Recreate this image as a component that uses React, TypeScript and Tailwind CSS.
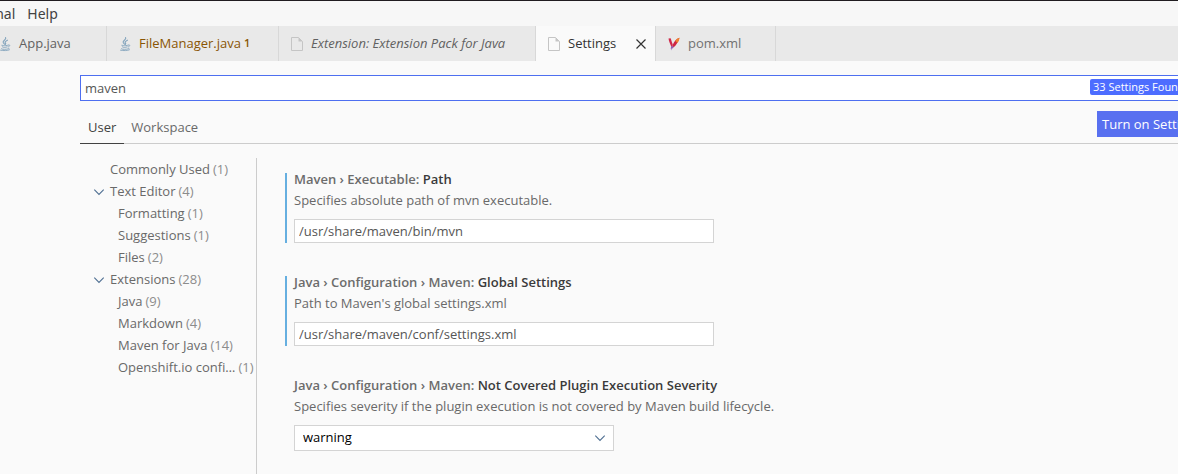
import { ReactNode, useState } from "react";

type TabInfo = { name: string; icon: ReactNode; className: string; badge?: string; active?: boolean };
type TreeRow = { name: string; count: number; level: number; open?: boolean };
type Setting = { id: string; scope: string; name: string; text: string; value: string; modified?: boolean; options?: string[] };

function JavaIcon() {
  return (
    <svg viewBox="0 0 12 16" className="h-4 w-3 shrink-0" fill="none" stroke="#84a5bd" strokeLinecap="round" aria-hidden="true">
      <path d="M6.6 1.5C8 3.6 3.2 4.7 4.2 6.5c.3.7.8 1 1.3 1.6M8.4 4.2C6.2 5.4 5.6 6.2 6.4 7c.5.5.4 1-.1 1.5" strokeWidth="1.1" />
      <path d="M2.8 9.1c-1.7.8 3.9.9 6.2.1M3.2 10.8c-.4.9 3.4.9 5 .1M9.5 9c2-.5 1.7 1.3-.2 2M2.5 12.5c-1.8.8 4.8 1.4 7.5.1M1.5 14.2c3 .7 7 .5 9-.4" strokeWidth="0.9" />
    </svg>
  );
}

function FileIcon() {
  return (
    <svg viewBox="0 0 12 14" className="h-3.5 w-3 shrink-0" fill="none" stroke="#c5c5c5" aria-hidden="true">
      <path d="M.5.5h7l4 4v9H.5z" />
      <path d="M7.500.5v4h4z" fill="#c5c5c5" stroke="none" />
    </svg>
  );
}

function MavenIcon() {
  return (
    <svg viewBox="0 0 12 14" className="h-3.5 w-3 shrink-0" aria-hidden="true">
      <path d="M.5 1.600 2.600 1.200C3.400 3 3.600 4.800 4.700 7.200L4.600 10 3.300 9.800C2.600 7.500.8 4.800.5 1.600z" fill="#d02a4b" />
      <path d="M11.500.8C8.500 1.600 6.200 4.600 4.900 7.600L4 11.300c2-.7 4.600-3.600 5.600-6z" fill="#cf2744" />
      <path d="M11.500.8C9.700 1.200 8.200 2.400 7.200 3.700L9.400 5.900C11 4.500 11.200 2.600 11.500.8z" fill="#ee8130" />
      <path d="M3.300 9.300h2.300L5 11.300 3.700 11.600 3.200 13.600 2.700 11.500z" fill="#8e63b5" />
    </svg>
  );
}

function Chevron({ className }: { className: string }) {
  return (
    <svg viewBox="0 0 12 12" className={className} fill="none" stroke="currentColor" strokeWidth="1.1" aria-hidden="true">
      <path d="m1.300 3.700 4.700 4.700 4.700-4.700" />
    </svg>
  );
}

const tabs: TabInfo[] = [
  { name: "App.java", icon: <JavaIcon />, className: "-ml-[13px] w-[120px] text-[#616161]" },
  { name: "FileManager.java", icon: <JavaIcon />, badge: "1", className: "w-[172px] text-[#895503]" },
  { name: "Extension: Extension Pack for Java", icon: <FileIcon />, className: "w-[257px] italic text-[#616161]" },
  { name: "Settings", icon: <FileIcon />, active: true, className: "w-[120px] text-[#333333]" },
  { name: "pom.xml", icon: <MavenIcon />, className: "w-[120px] text-[#717171]" },
];

const tree: TreeRow[] = [
  { name: "Commonly Used", count: 1, level: 1 },
  { name: "Text Editor", count: 4, level: 1, open: true },
  { name: "Formatting", count: 1, level: 2 },
  { name: "Suggestions", count: 1, level: 2 },
  { name: "Files", count: 2, level: 2 },
  { name: "Extensions", count: 28, level: 1, open: true },
  { name: "Java", count: 9, level: 2 },
  { name: "Markdown", count: 4, level: 2 },
  { name: "Maven for Java", count: 14, level: 2 },
  { name: "Openshift.io confi…", count: 1, level: 2 },
];

const settings: Setting[] = [
  { id: "mvn-path", scope: "Maven › Executable:", name: "Path", text: "Specifies absolute path of mvn executable.", value: "/usr/share/maven/bin/mvn", modified: true },
  { id: "global-settings", scope: "Java › Configuration › Maven:", name: "Global Settings", text: "Path to Maven's global settings.xml", value: "/usr/share/maven/conf/settings.xml", modified: true },
  { id: "severity", scope: "Java › Configuration › Maven:", name: "Not Covered Plugin Execution Severity", text: "Specifies severity if the plugin execution is not covered by Maven build lifecycle.", value: "warning", options: ["ignore", "warning", "error"] },
];

function SettingItem({ item }: { item: Setting }) {
  const [value, setValue] = useState(item.value);
  return (
    <section className={`border-l-2 pl-[7px] ${item.modified ? "border-[#66afe0]" : "border-transparent"}`}>
      <label htmlFor={item.id} className="block h-[14px] font-semibold leading-[12px] text-[#6c6c6c]">
        {item.scope} <span className="text-[#3a3a3a]">{item.name}</span>
      </label>
      <p className="mt-1 h-[18px] leading-[18px]">{item.text}</p>
      {item.options ? (
        <div className="relative mt-[10px] w-80">
          <select id={item.id} value={value} onChange={(e) => setValue(e.target.value)} className="block h-[26px] w-full appearance-none border border-[#d4d4d4] bg-white px-2 text-black outline-none">
            {item.options.map((o) => <option key={o}>{o}</option>)}
          </select>
          <Chevron className="pointer-events-none absolute right-2 top-[7px] size-3 text-[#4f6f92]" />
        </div>
      ) : (
        <input id={item.id} value={value} onChange={(e) => setValue(e.target.value)} className="mt-[10px] block h-6 w-[420px] border border-[#d4d4d4] bg-white px-1 text-[#565656] outline-none" />
      )}
    </section>
  );
}

export default function App() {
  const [query, setQuery] = useState("maven");
  return (
    <div className="flex min-h-screen flex-col overflow-hidden whitespace-nowrap bg-[#fafafa] font-['Open_Sans',sans-serif] text-[13px] text-[#696969]">
      <nav className="-ml-[42px] flex h-[26px] items-center gap-3 border-t border-[#201c20] bg-[#f7f7f7] font-['Noto_Sans',sans-serif] text-[14px] text-[#424242]">
        <button className="leading-[18px]">Terminal</button>
        <button className="leading-[18px]">Help</button>
      </nav>
      <div role="tablist" className="flex h-[35px] bg-[#e9e9e9]">
        {tabs.map((t) => (
          <div key={t.name} className={`flex shrink-0 items-center border-r border-[#d8d8d8] pl-3 ${t.active ? "bg-[#fafafa]" : ""} ${t.className}`}>
            <button role="tab" aria-selected={!!t.active} className="flex items-center gap-2">
              {t.icon}
              <span>{t.name}</span>
              {t.badge && <span className="-ml-1.5 pl-px text-[11px] font-semibold">{t.badge}</span>}
            </button>
            {t.active && (
              <button aria-label="Close Settings" className="ml-auto mr-2">
                <svg viewBox="0 0 12 12" className="size-3" stroke="#333333" strokeWidth="1.2" aria-hidden="true">
                  <path d="m1.500 1.500 9 9m0-9-9 9" />
                </svg>
              </button>
            )}
          </div>
        ))}
      </div>
      <header className="-mr-16 ml-20 pt-[14px]">
        <div className="relative">
          <input aria-label="Search settings" value={query} onChange={(e) => setQuery(e.target.value)} className="block h-[26px] w-full border border-[#4e6ff0] bg-white px-1 text-[#565656] outline-none" />
          <span className="absolute right-[54px] top-1 w-[98px] rounded-xs bg-[#4d6dff] px-[3px] text-[11px] leading-4 text-white">33 Settings Found</span>
        </div>
        <div className="mt-[9px] flex h-[34px] items-start justify-between border-b border-[#cccccc]">
          <div role="tablist" className="flex h-[34px]">
            <button role="tab" aria-selected="true" className="border-b border-[#424242] px-2 pt-0.5 text-[#424242]">User</button>
            <button role="tab" aria-selected="false" className="px-[7px] pt-0.5">Workspace</button>
          </div>
          <button className="mt-px h-[26px] w-[145px] bg-[#5870f0] px-[5px] pt-px text-left text-white">Turn on Settings Sync</button>
        </div>
      </header>
      <main className="flex grow pt-[14px]">
        <ul className="ml-20 w-[177px] shrink-0 border-r border-[#cccccc] pt-px">
          {tree.map((r) => (
            <li key={r.name}>
              <button className={`flex h-[22px] w-full items-center ${r.level === 2 ? "pl-[38px]" : r.open ? "pl-[13px]" : "pl-[30px]"}`}>
                {r.open && <Chevron className="mr-[5px] size-3 shrink-0 text-[#4f6f92]" />}
                <span>{r.name}</span>
                <span className="ml-[3px] text-[#8c8c8c]">({r.count})</span>
              </button>
            </li>
          ))}
        </ul>
        <div className="ml-7 flex flex-col gap-[33px] pt-[15px]">
          {settings.map((s) => <SettingItem key={s.id} item={s} />)}
        </div>
      </main>
    </div>
  );
}
